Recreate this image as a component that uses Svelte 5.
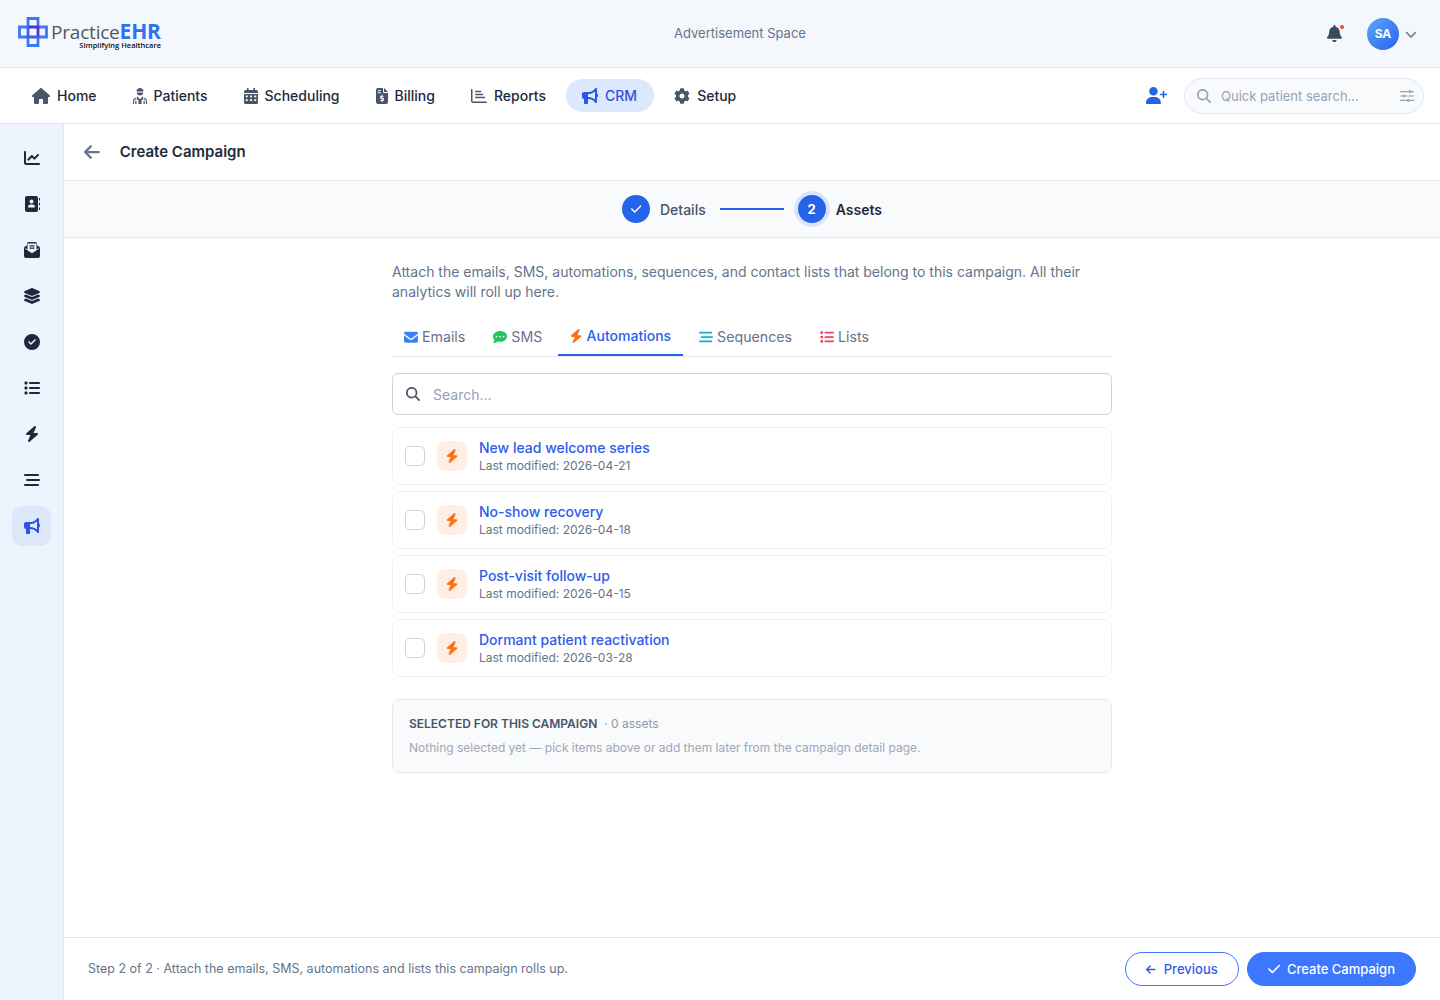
<script>
  const icons = {
    house: [576, 'M575.8 255.5c0 18-15 32.1-32 32.1h-32l.7 160.2c0 2.7-.2 5.4-.5 8.1V472c0 22.1-17.9 40-40 40H456c-1.1 0-2.2 0-3.3-.1c-1.4 .1-2.8 .1-4.2 .1H416 392c-22.1 0-40-17.9-40-40V448 384c0-17.7-14.3-32-32-32H256c-17.7 0-32 14.3-32 32v64 24c0 22.1-17.9 40-40 40H160 128.1c-1.5 0-3-.1-4.5-.2c-1.2 .1-2.4 .2-3.6 .2H104c-22.1 0-40-17.9-40-40V360c0-.9 0-1.9 .1-2.8V287.6H32c-18 0-32-14-32-32.1c0-9 3-17 10-24L266.4 8c7-7 15-8 22-8s15 2 21 7L564.8 231.5c8 7 12 15 11 24z'],
    patient: [448, 'M112 96c0-53 50-96 112-96s112 43 112 96v16H112zM120 144h208c-4 56-48 96-104 96s-100-40-104-96zM120 288c10-6 22-8 32-8l72 88 72-88c10 0 22 2 32 8v88h-40l-16 32v104H176V408l-16-32h-40zM88 304v72H40l-8 136H0v-80c0-56 36-108 88-128zM360 304c52 20 88 72 88 128v80h-32l-8-136h-48zM72 408h40v104H72zM336 408h40v104h-40z'],
    calendar: [448, 'M96 0h48v64h160V0h48v64h48a48 48 0 0 1 48 48v48H0v-48a48 48 0 0 1 48-48h48zM0 192h448v272a48 48 0 0 1-48 48H48a48 48 0 0 1-48-48zM56 240v56h64v-56zM192 240v56h64v-56zM328 240v56h64v-56zM56 360v56h64v-56zM192 360v56h64v-56zM328 360v56h64v-56z'],
    invoice: [384, 'M64 0h160v128a32 32 0 0 0 32 32h128v288a64 64 0 0 1-64 64H64a64 64 0 0 1-64-64V64A64 64 0 0 1 64 0zM256 0l128 128H256zM56 72v32h96V72zM56 136v32h96v-32zM176 216v28c-30 6-50 26-50 52 0 30 24 46 54 54 22 6 30 11 30 20 0 10-10 16-26 16-14 0-30-6-44-14l-14 28c14 9 32 15 50 18v30h32v-30c30-6 50-26 50-54 0-30-24-46-54-54-22-6-30-11-30-20 0-9 8-14 22-14 12 0 26 4 38 11l14-28c-12-7-26-12-40-15v-28z'],
    bullhorn: [512, 'M480 32c0-12.9-7.8-24.6-19.8-29.6s-25.7-2.2-34.9 6.9L381.7 53c-48 48-113.1 75-181 75H192 160 64c-35.3 0-64 28.7-64 64v96c0 35.3 28.7 64 64 64l0 128c0 17.7 14.3 32 32 32h64c17.7 0 32-14.3 32-32V352l8.7 0c67.9 0 133 27 181 75l43.6 43.6c9.2 9.2 22.9 11.9 34.9 6.9s19.8-16.6 19.8-29.6V300.4c18.6-8.8 32-32.5 32-60.4s-13.4-51.6-32-60.4V32zm-64 76.7V240 371.3C357.2 317.8 280.5 288 200.7 288H192V192h8.7c79.8 0 156.5-29.8 215.3-83.3z'],
    gear: [512, 'M487.4 315.7l-42.6-24.6c4.3-23.2 4.3-47 0-70.2l42.6-24.6c4.9-2.8 7.1-8.6 5.5-14-11.1-35.6-30-67.8-54.7-94.6-3.8-4.1-10-5.1-14.8-2.3L380.8 110c-17.9-15.4-38.5-27.3-60.8-35.1V25.8c0-5.6-3.9-10.5-9.4-11.7-36.7-8.2-74.3-7.8-109.2 0-5.5 1.2-9.4 6.1-9.4 11.7V75c-22.2 7.9-42.8 19.8-60.8 35.1L88.7 85.5c-4.9-2.8-11-1.9-14.8 2.3-24.7 26.7-43.6 58.9-54.7 94.6-1.7 5.4.6 11.2 5.5 14L67.3 221c-4.3 23.2-4.3 47 0 70.2l-42.6 24.6c-4.9 2.8-7.1 8.6-5.5 14 11.1 35.6 30 67.8 54.7 94.6 3.8 4.1 10 5.1 14.8 2.3l42.6-24.6c17.9 15.4 38.5 27.3 60.8 35.1v49.2c0 5.6 3.9 10.5 9.4 11.7 36.7 8.2 74.3 7.8 109.2 0 5.5-1.2 9.4-6.1 9.4-11.7v-49.2c22.2-7.9 42.8-19.8 60.8-35.1l42.6 24.6c4.9 2.8 11 1.9 14.8-2.3 24.7-26.7 43.6-58.9 54.7-94.6 1.5-5.5-.7-11.3-5.6-14.1zM256 336c-44.1 0-80-35.9-80-80s35.9-80 80-80 80 35.9 80 80-35.9 80-80 80z'],
    bell: [448, 'M224 0c-17.7 0-32 14.3-32 32V51.2C119 66 64 130.6 64 208v18.8c0 47-17.3 92.4-48.5 127.6l-7.4 8.3c-8.4 9.4-10.4 22.9-5.3 34.4S19.4 416 32 416H416c12.6 0 24-7.4 29.2-18.9s3.1-25-5.3-34.4l-7.4-8.3C401.3 319.2 384 273.9 384 226.8V208c0-77.4-55-142-128-156.8V32c0-17.7-14.3-32-32-32zm45.3 493.3c12-12 18.7-28.3 18.7-45.3H224 160c0 17 6.7 33.3 18.7 45.3s28.3 18.7 45.3 18.7s33.3-6.7 45.3-18.7z'],
    userPlus: [640, 'M96 128a128 128 0 1 1 256 0A128 128 0 1 1 96 128zM0 482.3C0 383.8 79.8 304 178.3 304h91.4C368.2 304 448 383.8 448 482.3c0 16.4-13.3 29.7-29.7 29.7H29.7C13.3 512 0 498.7 0 482.3zM504 312V248H440c-13.3 0-24-10.7-24-24s10.7-24 24-24h64V136c0-13.3 10.7-24 24-24s24 10.7 24 24v64h64c13.3 0 24 10.7 24 24s-10.7 24-24 24H552v64c0 13.3-10.7 24-24 24s-24-10.7-24-24z'],
    search: [512, 'M416 208c0 45.9-14.9 88.3-40 122.7L502.6 457.4c12.5 12.5 12.5 32.8 0 45.3s-32.8 12.5-45.3 0L330.7 376c-34.4 25.2-76.8 40-122.7 40C93.1 416 0 322.9 0 208S93.1 0 208 0S416 93.1 416 208zM208 352a144 144 0 1 0 0-288 144 144 0 1 0 0 288z'],
    check: [448, 'M438.6 105.4c12.5 12.5 12.5 32.8 0 45.3l-256 256c-12.5 12.5-32.8 12.5-45.3 0l-128-128c-12.5-12.5-12.5-32.8 0-45.3s32.8-12.5 45.3 0L160 338.7 393.4 105.4c12.5-12.5 32.8-12.5 45.3 0z'],
    arrowLeft: [448, 'M9.4 233.4c-12.5 12.5-12.5 32.8 0 45.3l160 160c12.5 12.5 32.8 12.5 45.3 0s12.5-32.8 0-45.3L109.2 288 416 288c17.7 0 32-14.3 32-32s-14.3-32-32-32l-306.7 0L214.6 118.6c12.5-12.5 12.5-32.8 0-45.3s-32.8-12.5-45.3 0l-160 160z'],
    bolt: [448, 'M349.4 44.6c5.9-13.7 1.5-29.7-10.6-38.5s-28.6-8-39.9 1.8l-256 224c-10 8.8-13.6 22.9-8.9 35.3S50.7 288 64 288H175.5L98.6 467.4c-5.9 13.7-1.5 29.7 10.6 38.5s28.6 8 39.9-1.8l256-224c10-8.8 13.6-22.9 8.9-35.3s-16.6-20.7-30-20.7H272.5L349.4 44.6z'],
    circleCheck: [512, 'M256 512A256 256 0 1 0 256 0a256 256 0 1 0 0 512zM369 209L241 337c-9.4 9.4-24.6 9.4-33.9 0l-64-64c-9.4-9.4-9.4-24.6 0-33.9s24.6-9.4 33.9 0l47 47L335 175c9.4-9.4 24.6-9.4 33.9 0s9.4 24.6 0 33.9z'],
    list: [512, 'M40 48C26.7 48 16 58.7 16 72v48c0 13.3 10.7 24 24 24H88c13.3 0 24-10.7 24-24V72c0-13.3-10.7-24-24-24H40zM192 64c-17.7 0-32 14.3-32 32s14.3 32 32 32H480c17.7 0 32-14.3 32-32s-14.3-32-32-32H192zm0 160c-17.7 0-32 14.3-32 32s14.3 32 32 32H480c17.7 0 32-14.3 32-32s-14.3-32-32-32H192zm0 160c-17.7 0-32 14.3-32 32s14.3 32 32 32H480c17.7 0 32-14.3 32-32s-14.3-32-32-32H192zM16 232v48c0 13.3 10.7 24 24 24H88c13.3 0 24-10.7 24-24V232c0-13.3-10.7-24-24-24H40c-13.3 0-24 10.7-24 24zM40 368c-13.3 0-24 10.7-24 24v48c0 13.3 10.7 24 24 24H88c13.3 0 24-10.7 24-24V392c0-13.3-10.7-24-24-24H40z'],
    bars: [512, 'M32 64h416a32 32 0 0 1 0 64H32a32 32 0 0 1 0-64zM96 224h384a32 32 0 0 1 0 64H96a32 32 0 0 1 0-64zM32 384h416a32 32 0 0 1 0 64H32a32 32 0 0 1 0-64z'],
    chartLine: [512, 'M32 32a32 32 0 0 1 32 32v336a16 16 0 0 0 16 16h400a32 32 0 0 1 0 64H80a80 80 0 0 1-80-80V64a32 32 0 0 1 32-32zM470 137a32 32 0 0 1 0 46L355 298a32 32 0 0 1-46 0l-57-58-92 92a32 32 0 0 1-46-46l115-115a32 32 0 0 1 46 0l57 58 92-92a32 32 0 0 1 46 0z'],
    chartBar: [512, 'M24 32a24 24 0 0 1 24 24v360a16 16 0 0 0 16 16h424a24 24 0 0 1 0 48H64a64 64 0 0 1-64-64V56a24 24 0 0 1 24-24zM128 112a24 24 0 0 1 24-24h152a24 24 0 0 1 0 48H152a24 24 0 0 1-24-24zM128 208a24 24 0 0 1 24-24h216a24 24 0 0 1 0 48H152a24 24 0 0 1-24-24zM128 304a24 24 0 0 1 24-24h280a24 24 0 0 1 0 48H152a24 24 0 0 1-24-24z'],
    addressBook: [512, 'M96 0h288a64 64 0 0 1 64 64v384a64 64 0 0 1-64 64H96a64 64 0 0 1-64-64V64A64 64 0 0 1 96 0zM240 112a64 64 0 1 0 0 128 64 64 0 1 0 0-128zM144 368h192c9 0 16-7 16-16 0-44-36-80-80-80h-64c-44 0-80 36-80 80 0 9 7 16 16 16zM480 64h32v80h-32zM480 216h32v80h-32zM480 368h32v80h-32z'],
    mailOpen: [512, 'M150 0h212c30 0 54 24 54 54v46l72 48c15 12 24 30 24 50v250c0 35-29 64-64 64H64c-35 0-64-29-64-64V198c0-20 9-38 24-50l72-48V54c0-30 24-54 54-54zM112 44v196l-76-52v24l220 150 220-150v-24l-76 52V44zM176 104h160v36H176zM176 176h160v36H176z'],
    layers: [512, 'M256 0c8 0 15 2 22 5l210 91c14 6 24 18 24 32s-10 26-24 32l-210 91c-14 6-30 6-44 0L24 160C10 154 0 142 0 128s10-26 24-32L234 5c7-3 14-5 22-5zM65 205l169 73c14 6 30 6 44 0l169-73 41 18c14 6 24 18 24 32s-10 26-24 32L278 378c-14 6-30 6-44 0L24 287C10 281 0 269 0 255s10-26 24-32zM65 332l169 73c14 6 30 6 44 0l169-73 41 18c14 6 24 18 24 32s-10 26-24 32L278 505c-14 6-30 6-44 0L24 414C10 408 0 396 0 382s10-26 24-32z'],
    envelope: [512, 'M48 64h416c26 0 48 22 48 48 0 15-7 29-19 38L275 313c-11 8-27 8-38 0L19 150C7 141 0 127 0 112c0-26 22-48 48-48zM0 192l218 164c23 17 53 17 76 0l218-164v208c0 35-29 64-64 64H64c-35 0-64-29-64-64z'],
    comment: [512, 'M256 32C115 32 0 125 0 240c0 50 22 95 58 130-13 35-40 65-41 65-9 9-11 17-7 25s11 12 20 12c66 0 116-32 141-51 27 8 56 11 85 11 141 0 256-93 256-208S397 32 256 32zM128 272a32 32 0 1 1 0-64 32 32 0 0 1 0 64zM256 272a32 32 0 1 1 0-64 32 32 0 0 1 0 64zM384 272a32 32 0 1 1 0-64 32 32 0 0 1 0 64z'],
    sliders: [512, 'M0 96a20 20 0 0 1 20-20h296a52 52 0 0 1 100 0h76a20 20 0 0 1 0 40h-76a52 52 0 0 1-100 0H20a20 20 0 0 1-20-20zM366 78a18 18 0 1 0 0 36 18 18 0 0 0 0-36zM0 256a20 20 0 0 1 20-20h76a52 52 0 0 1 100 0h296a20 20 0 0 1 0 40H196a52 52 0 0 1-100 0H20a20 20 0 0 1-20-20zM146 238a18 18 0 1 0 0 36 18 18 0 0 0 0-36zM0 416a20 20 0 0 1 20-20h236a52 52 0 0 1 100 0h136a20 20 0 0 1 0 40H356a52 52 0 0 1-100 0H20a20 20 0 0 1-20-20zM306 398a18 18 0 1 0 0 36 18 18 0 0 0 0-36z'],
    chevron: [512, 'M233.4 406.6c12.5 12.5 32.8 12.5 45.3 0l192-192c12.5-12.5 12.5-32.8 0-45.3s-32.8-12.5-45.3 0L256 338.7 86.6 169.4c-12.5-12.5-32.8-12.5-45.3 0s-12.5 32.8 0 45.3l192 192z']
  };

  const navItems = [
    { label: 'Home', icon: 'house' },
    { label: 'Patients', icon: 'patient' },
    { label: 'Scheduling', icon: 'calendar' },
    { label: 'Billing', icon: 'invoice' },
    { label: 'Reports', icon: 'chartBar' },
    { label: 'CRM', icon: 'bullhorn', active: true },
    { label: 'Setup', icon: 'gear' }
  ];

  const sideItems = [
    { icon: 'chartLine' },
    { icon: 'addressBook' },
    { icon: 'mailOpen' },
    { icon: 'layers' },
    { icon: 'circleCheck' },
    { icon: 'list' },
    { icon: 'bolt' },
    { icon: 'bars' },
    { icon: 'bullhorn', active: true }
  ];

  const tabs = [
    { label: 'Emails', icon: 'envelope', tone: 'blue' },
    { label: 'SMS', icon: 'comment', tone: 'green' },
    { label: 'Automations', icon: 'bolt', tone: 'orange', active: true },
    { label: 'Sequences', icon: 'bars', tone: 'cyan' },
    { label: 'Lists', icon: 'list', tone: 'red' }
  ];

  const automations = [
    { name: 'New lead welcome series', modified: '2026-04-21' },
    { name: 'No-show recovery', modified: '2026-04-18' },
    { name: 'Post-visit follow-up', modified: '2026-04-15' },
    { name: 'Dormant patient reactivation', modified: '2026-03-28' }
  ];
</script>

{#snippet icon(name, size = 16)}
  <svg
    class="ico"
    viewBox="0 0 {icons[name][0]} 512"
    width={(size * icons[name][0]) / 512}
    height={size}
    aria-hidden="true"
  >
    <path fill="currentColor" fill-rule="evenodd" d={icons[name][1]} />
  </svg>
{/snippet}

<div class="shell">
  <header class="topbar">
    <div class="logo">
      <svg class="logo-mark" viewBox="0 0 30 30" width="30" height="30" aria-hidden="true">
        <path d="M10 1.5h10v8.5h8.500v10h-8.500v8.500h-10v-8.500H1.500v-10h8.500z" fill="none" stroke="#3f78f5" stroke-width="2.800" />
        <path d="M10 10h10v10" fill="none" stroke="#4a35d8" stroke-width="2.800" />
        <path d="M20 20h-10v-10" fill="none" stroke="#3f5ff0" stroke-width="2.800" />
      </svg>
      <div class="logo-text">
        <div class="logo-name">Practice<b>EHR</b></div>
        <div class="logo-tag">Simplifying Healthcare</div>
      </div>
    </div>
    <div class="ad">Advertisement Space</div>
    <div class="top-actions">
      <span class="bell">
        {@render icon('bell', 17)}
        <i class="bell-dot"></i>
      </span>
      <span class="avatar">SA</span>
      <span class="chev">{@render icon('chevron', 12)}</span>
    </div>
  </header>

  <nav class="navbar">
    <div class="nav-items">
      {#each navItems as item}
        <div class="nav-item" class:active={item.active}>
          {@render icon(item.icon, 16)}
          <span>{item.label}</span>
        </div>
      {/each}
    </div>
    <div class="nav-right">
      <span class="add-user">{@render icon('userPlus', 17)}</span>
      <div class="quick-search">
        <span class="qs-icon">{@render icon('search', 14)}</span>
        <span class="qs-text">Quick patient search...</span>
        <span class="qs-filter">{@render icon('sliders', 14)}</span>
      </div>
    </div>
  </nav>

  <div class="body">
    <aside class="sidebar">
      {#each sideItems as item}
        <div class="side-item" class:active={item.active}>
          {@render icon(item.icon, 16)}
        </div>
      {/each}
    </aside>

    <main class="main">
      <div class="title-bar">
        <span class="back">{@render icon('arrowLeft', 18)}</span>
        <h1>Create Campaign</h1>
      </div>

      <div class="stepper">
        <span class="step-dot">{@render icon('check', 12)}</span>
        <span class="step-label">Details</span>
        <span class="step-line"></span>
        <span class="step-dot current">2</span>
        <span class="step-label current">Assets</span>
      </div>

      <div class="content">
        <div class="column">
          <p class="intro">
            Attach the emails, SMS, automations, sequences, and contact lists that belong to this campaign. All their analytics will roll up here.
          </p>

          <div class="tabs">
            {#each tabs as tab}
              <div class="tab" class:active={tab.active}>
                <span class="tab-icon {tab.tone}">{@render icon(tab.icon, 14)}</span>
                <span>{tab.label}</span>
              </div>
            {/each}
          </div>

          <div class="search">
            <span class="search-icon">{@render icon('search', 14)}</span>
            <span class="search-text">Search...</span>
          </div>

          <div class="rows">
            {#each automations as row}
              <div class="row">
                <span class="checkbox"></span>
                <span class="row-icon">{@render icon('bolt', 14)}</span>
                <div class="row-text">
                  <div class="row-name">{row.name}</div>
                  <div class="row-meta">Last modified: {row.modified}</div>
                </div>
              </div>
            {/each}
          </div>

          <section class="selected">
            <div class="selected-head">
              <strong>SELECTED FOR THIS CAMPAIGN</strong>
              <span>· 0 assets</span>
            </div>
            <p>Nothing selected yet — pick items above or add them later from the campaign detail page.</p>
          </section>
        </div>
      </div>

      <footer class="footer">
        <span class="foot-note">Step 2 of 2 · Attach the emails, SMS, automations and lists this campaign rolls up.</span>
        <div class="foot-actions">
          <button class="btn ghost">{@render icon('arrowLeft', 11)}Previous</button>
          <button class="btn primary">{@render icon('check', 14)}Create Campaign</button>
        </div>
      </footer>
    </main>
  </div>
</div>

<style>
  :global(body) {
    margin: 0;
    font-family: Inter, "Liberation Sans", sans-serif;
    color: #1e293b;
    background: #fff;
  }

  .ico {
    display: block;
    flex: none;
  }

  .shell {
    height: 1000px;
    display: flex;
    flex-direction: column;
    overflow: hidden;
  }

  .topbar {
    height: 67px;
    flex: none;
    display: grid;
    grid-template-columns: 1fr auto 1fr;
    align-items: center;
    padding: 0 23px;
    background: #f4f7fc;
    border-bottom: 1px solid #e3e7ef;
  }

  .logo {
    display: flex;
    align-items: flex-start;
    gap: 3px;
    margin-left: -5px;
  }

  .logo-text {
    width: 110px;
    padding-top: 4px;
  }

  .logo-name {
    font-family: "Open Sans", sans-serif;
    font-size: 19px;
    line-height: 22px;
    letter-spacing: -0.2px;
    color: #52575f;
    white-space: nowrap;
  }

  .logo-name b {
    font-size: 21px;
    line-height: 20px;
    color: #2f72f0;
    font-weight: 700;
  }

  .logo-tag {
    font-family: "Open Sans", sans-serif;
    font-size: 7.5px;
    font-weight: 600;
    line-height: 9px;
    margin-top: -2px;
    text-align: right;
    color: #111;
    white-space: nowrap;
  }

  .ad {
    margin: 0 0 2px 40px;
    font-size: 13px;
    color: #64748b;
  }

  .top-actions {
    display: flex;
    align-items: center;
    justify-content: flex-end;
  }

  .bell {
    position: relative;
    color: #3c4a5e;
    margin-right: 25px;
  }

  .bell-dot {
    position: absolute;
    top: 0;
    right: -2px;
    width: 4px;
    height: 4px;
    border-radius: 50%;
    background: #ef4444;
  }

  .avatar {
    width: 32px;
    height: 32px;
    border-radius: 50%;
    display: flex;
    align-items: center;
    justify-content: center;
    font-size: 12px;
    font-weight: 700;
    color: #fff;
    background: linear-gradient(135deg, #60a5fa, #2563eb);
  }

  .chev {
    margin-left: 6px;
    color: #64748b;
  }

  .navbar {
    height: 55px;
    flex: none;
    display: flex;
    align-items: center;
    justify-content: space-between;
    padding: 0 16px;
    background: #fff;
    border-bottom: 1px solid #e3e7ef;
  }

  .nav-items {
    display: flex;
    gap: 4px;
  }

  .nav-item {
    height: 33px;
    padding: 0 16px;
    display: flex;
    align-items: center;
    gap: 7px;
    border-radius: 17px;
    font-size: 14px;
    font-weight: 500;
    color: #1e293b;
  }

  .nav-item .ico {
    color: #475569;
  }

  .nav-item.active {
    padding-right: 17px;
    background: #dbe8fd;
    color: #2f55e0;
  }

  .nav-item.active .ico {
    color: #2f55e0;
  }

  .nav-right {
    display: flex;
    align-items: center;
    gap: 17px;
  }

  .add-user {
    color: #2563eb;
  }

  .quick-search {
    box-sizing: border-box;
    width: 240px;
    height: 36px;
    padding: 0 9px 0 12px;
    display: flex;
    align-items: center;
    background: #f8fafc;
    border: 1px solid #e2e6ee;
    border-radius: 18px;
  }

  .qs-icon {
    color: #94a3b8;
  }

  .qs-text {
    flex: 1;
    margin-left: 10px;
    font-size: 13px;
    color: #94a3b8;
  }

  .qs-filter {
    color: #94a3b8;
  }

  .body {
    flex: 1;
    min-height: 0;
    display: flex;
  }

  .sidebar {
    box-sizing: content-box;
    width: 39px;
    flex: none;
    padding: 14px 12px 0;
    display: flex;
    flex-direction: column;
    gap: 6px;
    background: #eef4fd;
    border-right: 1px solid #e3e7ef;
  }

  .side-item {
    height: 40px;
    display: flex;
    align-items: center;
    justify-content: center;
    border-radius: 10px;
    color: #1e293b;
  }

  .side-item.active {
    background: #dce7f9;
    color: #2f55e0;
  }

  .main {
    flex: 1;
    min-width: 0;
    display: flex;
    flex-direction: column;
  }

  .title-bar {
    box-sizing: border-box;
    height: 57px;
    flex: none;
    display: flex;
    align-items: center;
    gap: 20px;
    padding-left: 20px;
    border-bottom: 1px solid #e3e7ef;
  }

  .back {
    color: #64748b;
  }

  h1 {
    margin: 0 0 2px;
    font-size: 15px;
    font-weight: 600;
    color: #1e293b;
  }

  .stepper {
    height: 56px;
    flex: none;
    display: flex;
    align-items: center;
    justify-content: center;
    background: #f9fafc;
    border-bottom: 1px solid #e3e7ef;
  }

  .step-dot {
    width: 28px;
    height: 28px;
    border-radius: 50%;
    display: flex;
    align-items: center;
    justify-content: center;
    background: #2563eb;
    color: #fff;
    font-size: 13px;
    font-weight: 700;
  }

  .step-dot.current {
    box-shadow: 0 0 0 4px #dbe5fa;
  }

  .step-label {
    margin-left: 10px;
    font-size: 14px;
    font-weight: 500;
    color: #475569;
  }

  .step-label.current {
    font-weight: 600;
    color: #1e293b;
  }

  .step-line {
    width: 64px;
    height: 2px;
    margin: 0 14px;
    background: #2563eb;
  }

  .content {
    flex: 1;
    min-height: 0;
    display: flex;
    justify-content: center;
  }

  .column {
    width: 720px;
    padding-top: 24px;
  }

  .intro {
    margin: 0;
    font-size: 14px;
    line-height: 20px;
    color: #64748b;
  }

  .tabs {
    margin-top: 17px;
    display: flex;
    gap: 4px;
    height: 37px;
    border-bottom: 1px solid #e3e7ef;
  }

  .tab {
    height: 37px;
    box-sizing: border-box;
    padding: 0 12px 2px;
    display: flex;
    align-items: center;
    gap: 4px;
    font-size: 14.2px;
    color: #64748b;
  }

  .tab.active {
    margin-bottom: -1px;
    padding-bottom: 2px;
    font-size: 14px;
    color: #2563eb;
    font-weight: 500;
    border-bottom: 2px solid #2563eb;
  }

  .tab-icon.blue { color: #3b82f6; }
  .tab-icon.green { color: #22c55e; }
  .tab-icon.orange { color: #f97316; }
  .tab-icon.cyan { color: #06b6d4; }
  .tab-icon.red { color: #f43f5e; }

  .search {
    height: 40px;
    margin-top: 16px;
    padding: 0 13px;
    display: flex;
    align-items: center;
    gap: 13px;
    border: 1px solid #cbd1de;
    border-radius: 6px;
  }

  .search-icon {
    color: #475569;
  }

  .search-text {
    font-size: 14px;
    color: #94a3b8;
  }

  .rows {
    margin-top: 12px;
    display: flex;
    flex-direction: column;
    gap: 6px;
  }

  .row {
    height: 56px;
    padding: 0 12px;
    display: flex;
    align-items: center;
    border: 1px solid #edf0f6;
    border-radius: 8px;
  }

  .checkbox {
    width: 18px;
    height: 18px;
    border: 1px solid #cbd5e1;
    border-radius: 5px;
    background: #fff;
  }

  .row-icon {
    width: 30px;
    height: 30px;
    margin-left: 12px;
    display: flex;
    align-items: center;
    justify-content: center;
    border-radius: 8px;
    background: #ffeee4;
    color: #f97316;
  }

  .row-text {
    margin-left: 12px;
  }

  .row-name {
    font-size: 14px;
    line-height: 18px;
    font-weight: 500;
    color: #2f5bea;
  }

  .row-meta {
    margin-top: 1px;
    font-size: 12px;
    line-height: 16px;
    color: #64748b;
  }

  .selected {
    margin-top: 22px;
    padding: 16px;
    height: 40px;
    background: #f9fafc;
    border: 1px solid #e5e8ee;
    border-radius: 8px;
  }

  .selected-head {
    display: flex;
    gap: 7px;
    font-size: 12px;
    line-height: 16px;
    color: #8f98a8;
  }

  .selected-head strong {
    font-weight: 600;
    color: #475569;
  }

  .selected p {
    margin: 8px 0 0;
    font-size: 12px;
    line-height: 16px;
    color: #a0a7b5;
  }

  .footer {
    height: 62px;
    flex: none;
    padding: 0 24px;
    display: flex;
    align-items: center;
    justify-content: space-between;
    border-top: 1px solid #e3e7ef;
  }

  .foot-note {
    margin-bottom: 2px;
    font-size: 12.5px;
    color: #64748b;
  }

  .foot-actions {
    display: flex;
    gap: 8px;
  }

  .btn {
    height: 34px;
    padding: 0 20px;
    display: flex;
    align-items: center;
    gap: 7px;
    border-radius: 17px;
    font-family: inherit;
    font-size: 13px;
    font-weight: 500;
  }

  .btn.ghost {
    gap: 8px;
    background: #fff;
    border: 1px solid #3b78ff;
    color: #2f5bea;
  }

  .btn.primary {
    background: #3b78ff;
    border: 1px solid #3b78ff;
    color: #fff;
  }
</style>
